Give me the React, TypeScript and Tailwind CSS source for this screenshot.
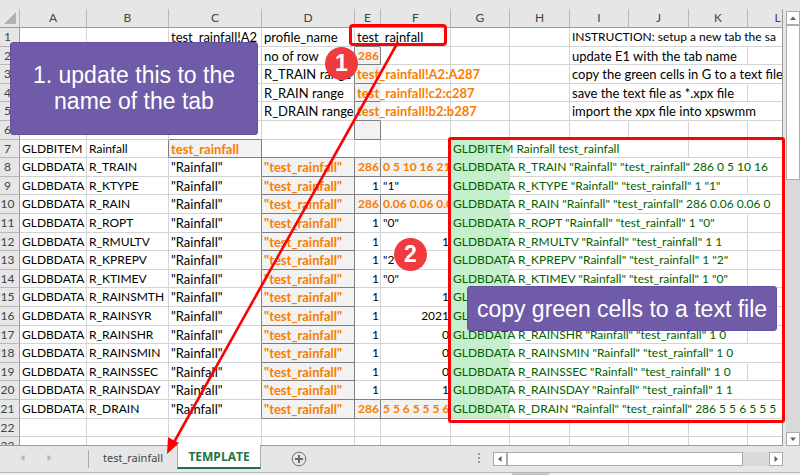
import type { ReactNode } from "react";

type CellMap = Record<number, string>;

interface Row {
  cells: CellMap;
  /** columns whose right grid line is covered by text running over it */
  open?: number[];
}

const A = 0, B = 1, C = 2, D = 3, E = 4, F = 5, G = 6, H = 7, I = 8, J = 9, K = 10;

const COLUMNS = [
  { name: "A", width: "w-[67px]" },
  { name: "B", width: "w-[82px]" },
  { name: "C", width: "w-[93px]" },
  { name: "D", width: "w-[93px]" },
  { name: "E", width: "w-[26px]" },
  { name: "F", width: "w-[70px]" },
  { name: "G", width: "w-[59px]" },
  { name: "H", width: "w-[60px]" },
  { name: "I", width: "w-[59px]" },
  { name: "J", width: "w-[60px]" },
  { name: "K", width: "w-[59px]" },
  { name: "L", width: "w-[60px]" },
];

const ROW_HEIGHTS = ["h-[19px]", "h-[18px]", "h-[19px]", "h-[18px]", "h-[19px]"];

function record(key: string, count: string, value: string, out: string, long: boolean): Row {
  return {
    cells: {
      [A]: "GLDBDATA",
      [B]: key,
      [C]: '"Rainfall"',
      [D]: '"test_rainfall"',
      [E]: count,
      [F]: value,
      [G]: `GLDBDATA ${key} "Rainfall" "test_rainfall" ${out}`,
    },
    open: long ? [G, H, I, J, K] : [G, H, I, J],
  };
}

const ROWS: Row[] = [
  {
    cells: { [C]: "test_rainfall!A2", [D]: "profile_name", [E]: "test_rainfall", [I]: "INSTRUCTION: setup a new tab the sa" },
    open: [E, I, J, K],
  },
  { cells: { [D]: "no of row", [E]: "286", [I]: "update E1 with the tab name" }, open: [I, J] },
  {
    cells: { [D]: "R_TRAIN range", [E]: "test_rainfall!A2:A287", [I]: "copy the green cells in G to a text file" },
    open: [E, I, J, K],
  },
  { cells: { [D]: "R_RAIN range", [E]: "test_rainfall!c2:c287", [I]: "save the text file as *.xpx file" }, open: [E, I, J] },
  { cells: { [D]: "R_DRAIN range", [E]: "test_rainfall!b2:b287", [I]: "import the xpx file into xpswmm" }, open: [E, I, J, K] },
  { cells: {} },
  {
    cells: { [A]: "GLDBITEM", [B]: "Rainfall", [C]: "test_rainfall", [G]: "GLDBITEM Rainfall test_rainfall" },
    open: [G, H, I],
  },
  record("R_TRAIN", "286", "0 5 10 16 21", "286 0 5 10 16", true),
  record("R_KTYPE", "1", '"1"', '1 "1"', false),
  record("R_RAIN", "286", "0.06 0.06 0.06", "286 0.06 0.06 0", true),
  record("R_ROPT", "1", '"0"', '1 "0"', false),
  record("R_RMULTV", "1", "1", "1 1", false),
  record("R_KPREPV", "1", '"2"', '1 "2"', false),
  record("R_KTIMEV", "1", '"0"', '1 "0"', false),
  record("R_RAINSMTH", "1", "1", "1 1", true),
  record("R_RAINSYR", "1", "2021", "1 2021", true),
  record("R_RAINSHR", "1", "0", "1 0", false),
  record("R_RAINSMIN", "1", "0", "1 0", true),
  record("R_RAINSSEC", "1", "0", "1 0", false),
  record("R_RAINSDAY", "1", "1", "1 1", true),
  record("R_DRAIN", "286", "5 5 6 5 5 5 6", "286 5 5 6 5 5 5", true),
  { cells: {} },
  { cells: {} },
];

/** Cells in the grey "Calculation" style. Rows are numbered from 1. */
function isCalculated(row: number, col: number) {
  if (col === C) return row === 7;
  if (col === D) return row >= 8 && row <= 21;
  if (col === E) return (row >= 2 && row <= 6) || row === 8 || row === 10 || row === 21;
  if (col === F) return row === 8 || row === 10 || row === 21;
  return false;
}

function Cell({ row, col, text, open }: { row: number; col: number; text?: string; open: boolean }) {
  const calc = isCalculated(row, col);
  const green = col === G && row >= 7 && row <= 21;
  const numeric = (col === E || col === F) && text !== undefined && /^\d+$/.test(text);
  const small = numeric || col === A || col === B || col === F || col === G || (row === 1 && col === I);
  const right = open
    ? green ? "border-r-[#c6efce]" : "border-r-transparent"
    : calc || isCalculated(row, col + 1) ? "border-r-[#7f7f7f]" : "border-r-[#d4d4d4]";
  const bottom = green && row < 21
    ? "border-b-[#c6efce]"
    : calc || isCalculated(row + 1, col) ? "border-b-[#7f7f7f]" : "border-b-[#d4d4d4]";
  const fill = calc ? "bg-[#f2f2f2] font-bold text-[#fa7d00]" : green ? "bg-[#c6efce] text-[#006100]" : "text-black";
  return (
    <td className={`border-r border-b p-0 ${right} ${bottom} ${fill} ${numeric ? "text-right" : "text-left"}`}>
      <div className={`h-4 leading-4 whitespace-nowrap ${small ? "text-[12px]" : "text-[13px]"} ${numeric ? "pr-px" : "pl-0.5"} ${col === F ? "overflow-hidden" : ""}`}>
        {text}
      </div>
    </td>
  );
}

function Sheet() {
  return (
    <table className="w-[808px] table-fixed border-separate border-spacing-0 text-[12px]">
      <colgroup>
        <col className="w-[20px]" />
        {COLUMNS.map((c) => (
          <col key={c.name} className={c.width} />
        ))}
      </colgroup>
      <thead>
        <tr className="h-[19px] bg-[#e6e6e6] text-[#444]">
          <th className="border-r border-b border-r-[#b8b8b8] border-b-[#9b9b9b] p-0">
            <svg className="mr-[3px] ml-auto block" width="12" height="12" viewBox="0 0 12 12" aria-label="Select all">
              <path d="M12 0V12H0Z" fill="#b2b2b2" />
            </svg>
          </th>
          {COLUMNS.map((c) => (
            <th key={c.name} scope="col" className="border-r border-b border-r-[#b8b8b8] border-b-[#9b9b9b] p-0 text-center leading-4 font-normal">
              {c.name}
            </th>
          ))}
        </tr>
      </thead>
      <tbody>
        {ROWS.map((row, r) => (
          <tr key={r} className={ROW_HEIGHTS[r % 5]}>
            <th scope="row" className="border-r border-b border-r-[#9b9b9b] border-b-[#b8b8b8] bg-[#e6e6e6] p-0 pr-1 text-center leading-4 font-normal text-[#444]">
              {r + 1}
            </th>
            {COLUMNS.map((c, col) => (
              <Cell key={c.name} row={r + 1} col={col} text={row.cells[col]} open={row.open?.includes(col) ?? false} />
            ))}
          </tr>
        ))}
      </tbody>
    </table>
  );
}

function ScrollButton({ label, path }: { label: string; path: string }) {
  return (
    <button type="button" aria-label={label} className="flex size-[14px] shrink-0 items-center justify-center border border-[#ababab] bg-white">
      <svg width="8" height="8" viewBox="0 0 8 8">
        <path d={path} fill="#606060" />
      </svg>
    </button>
  );
}

function VerticalScrollbar() {
  return (
    <div className="flex w-[17px] shrink-0 flex-col items-center bg-[#e6e6e6] pt-[2px] pl-[2px]">
      <ScrollButton label="Scroll up" path="M1 6L4 2.5L7 6Z" />
      <div className="w-[14px] flex-1 bg-[#d9d9d9]">
        <div className="h-[38%] border border-[#ababab] bg-white" />
      </div>
      <ScrollButton label="Scroll down" path="M1 2.5L4 6L7 2.5Z" />
    </div>
  );
}

function TabBar() {
  return (
    <footer className="shrink-0 bg-[#e6e6e6] font-['Open_Sans','Noto_Sans',sans-serif] text-[12px]">
      <div className="flex h-[26px] items-start pr-[17px]">
        <div className="flex h-6 w-[88px] items-center gap-5 pl-[19px]">
          <button type="button" aria-label="Previous sheet">
            <svg width="7" height="8" viewBox="0 0 7 8"><path d="M5.5 0.5V7.5L1.5 4Z" fill="#b8b8b8" /></svg>
          </button>
          <button type="button" aria-label="Next sheet">
            <svg width="7" height="8" viewBox="0 0 7 8"><path d="M1.5 0.5V7.5L5.5 4Z" fill="#b8b8b8" /></svg>
          </button>
        </div>
        <div className="mt-1 h-[18px] w-px bg-[#ababab]" />
        <button type="button" className="h-6 w-[88px] font-['Noto_Sans',sans-serif] text-[11px] leading-6 text-[#444]">test_rainfall</button>
        <button type="button" className="-mt-px h-[24px] w-[84px] border-x border-b-2 border-x-[#ababab] border-b-[#217346] bg-white leading-6 font-bold text-[#217346]">
          TEMPLATE
        </button>
        <button type="button" aria-label="New sheet" className="mt-[5px] ml-[30px]">
          <svg width="16" height="16" viewBox="0 0 16 16" fill="none" stroke="#6a6a6a">
            <circle cx="8" cy="8" r="6.8" />
            <path d="M8 4V12M4 8H12" strokeWidth="2" />
          </svg>
        </button>
        <div className="mt-[7px] mr-[13px] ml-auto flex flex-col gap-[2px]">
          <span className="size-[2px] bg-[#9b9b9b]" />
          <span className="size-[2px] bg-[#9b9b9b]" />
          <span className="size-[2px] bg-[#9b9b9b]" />
        </div>
        <div className="mt-[6px] flex w-[37%] bg-[#d9d9d9]">
          <ScrollButton label="Scroll left" path="M5.5 1L2 4L5.5 7Z" />
          <div className="flex-1">
            <div className="h-[14px] w-[90%] border border-[#ababab] bg-white" />
          </div>
          <ScrollButton label="Scroll right" path="M2.5 1L6 4L2.5 7Z" />
        </div>
      </div>
      <div className="h-[3px] border-t border-[#b8b8b8] bg-[#f1f1f1] pl-[64%]">
        <div className="h-[2px] w-[37px] bg-[#c8c8c8]" />
      </div>
    </footer>
  );
}

function Callout({ className, children }: { className: string; children: ReactNode }) {
  return (
    <div className={`absolute flex items-center justify-center rounded-[3px] border border-[#6450a0] bg-[#6f5ba7] text-center font-['Liberation_Sans',Arial,sans-serif] text-[23px] leading-[26px] text-white ${className}`}>
      {children}
    </div>
  );
}

function Step({ className, children }: { className: string; children: ReactNode }) {
  return (
    <div className={`absolute flex size-[33px] items-center justify-center rounded-full bg-[#f03a3e] font-['Liberation_Sans',Arial,sans-serif] text-[23px] font-bold text-white ${className}`}>
      {children}
    </div>
  );
}

function Annotations() {
  return (
    <>
      <div className="absolute top-[24px] left-[349px] h-[22px] w-[98px] rounded-[4px] border-[3px] border-[#fb0207]" />
      <div className="absolute top-[137px] left-[448px] h-[286px] w-[337px] rounded-[3px] border-[3px] border-[#fb0207]" />
      <Step className="top-[47px] left-[325px]">1</Step>
      <Step className="top-[238px] left-[394px]">2</Step>
      <Callout className="top-[42px] left-[10px] h-[93px] w-[248px] pb-[2px]">
        1. update this to the
        <br />
        name of the tab
      </Callout>
      <Callout className="top-[286px] left-[467px] h-[45px] w-[310px] whitespace-nowrap">copy green cells to a text file</Callout>
      <svg className="pointer-events-none absolute top-0 left-0" width="460" height="475" viewBox="0 0 460 475">
        <path d="M398 42L173 444" stroke="#fb0207" strokeWidth="2.6" />
        <path d="M167 454L168 437L173 440L179 443Z" fill="#fb0207" />
      </svg>
    </>
  );
}

export default function App() {
  return (
    <div className="relative flex h-screen flex-col overflow-hidden bg-[#e6e6e6] font-['Lato','Liberation_Sans',sans-serif]">
      <div className="h-[9px] shrink-0" />
      <main className="flex min-h-0 flex-1">
        <div className="min-w-0 flex-1 overflow-hidden border-r border-b border-[#9b9b9b] bg-white">
          <Sheet />
        </div>
        <VerticalScrollbar />
      </main>
      <TabBar />
      <Annotations />
    </div>
  );
}
